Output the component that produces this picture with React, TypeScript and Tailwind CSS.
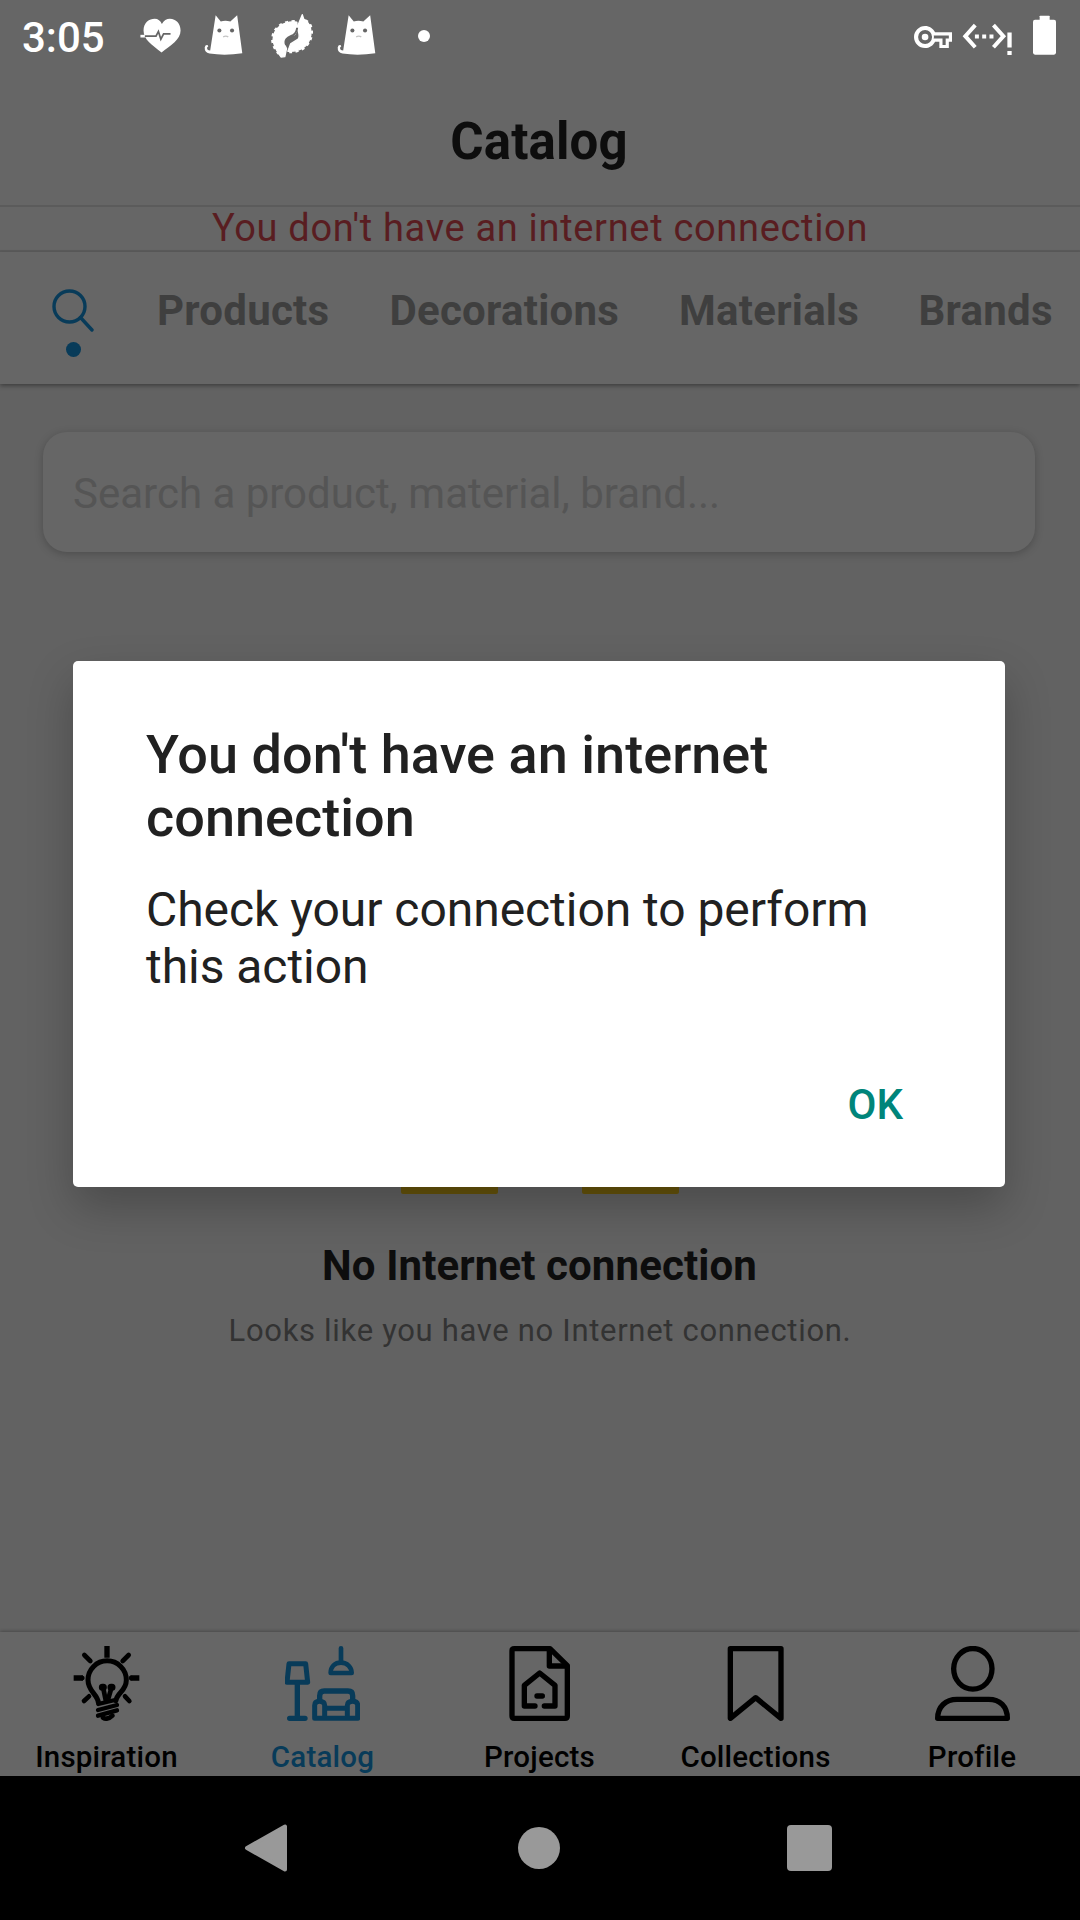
import type { ReactNode } from "react";

function CatIcon({ className }: { className: string }) {
  return (
    <svg className={className} viewBox="590 40 120 140" preserveAspectRatio="none">
      <path fill="#fff" d="M627 47 L642 65 Q655 61 670 65 L690 47 L705 160 Q655 168 609 161 Q594 158 595 142 Q597 134 604 136 Q608 139 602 143 Q601 152 611 152 Z" />
      <circle cx="638" cy="92" r="6" fill="#666" />
      <circle cx="675" cy="92" r="6" fill="#666" />
      <path d="M649 111 Q657 107 664 111" stroke="#c4c4c4" strokeWidth="4" fill="none" />
    </svg>
  );
}

function StatusBar() {
  return (
    <header className="flex h-[72px] shrink-0 items-start pl-[22px] pr-[23px] text-white">
      <div className="w-[116px] shrink-0 pt-[14px] text-[42px] font-medium leading-[48px]">3:05</div>
      <svg className="mt-[13px] h-[47px] w-[45px]" viewBox="400 40 130 140" preserveAspectRatio="none">
        <path fill="#fff" d="M468 158 C440 134 416 120 416 92 C416 68 433 57 448 57 C458 57 465 63 469 73 C474 62 483 57 492 57 C510 57 523 72 523 92 C523 120 495 135 468 158Z" />
        <path d="M407 109 H420" stroke="#fff" strokeWidth="8" />
        <path d="M420 109 H452 L459 95 L466 118 L474 102 H494" stroke="#666" strokeWidth="5" fill="none" />
      </svg>
      <CatIcon className="ml-[20px] mt-[13px] h-[47px] w-[41px]" />
      <svg className="ml-[24px] mt-[13px] h-[47px] w-[48px]" viewBox="780 40 140 140" preserveAspectRatio="none">
        <g fill="#fff" stroke="#fff" strokeLinejoin="round">
          <path strokeWidth="4" d="M864 67 C822 62 796 88 795 118 C796 142 806 152 818 171 L829 170 L834 146 C822 126 834 106 858 104 L866 88 Z" />
          <path strokeWidth="4" d="M880 45 L884 58 C902 68 907 82 905 105 C900 138 875 156 838 154 L846 132 L868 118 C876 108 866 92 866 80 Z" />
          <path fill="none" strokeWidth="8" strokeDasharray="9 10" d="M858 65 C822 64 794 86 793 118 C794 140 804 152 814 164 M888 62 C903 68 909 84 907 105 C902 138 875 157 842 156" />
        </g>
        <path d="M833 136 C825 116 842 112 854 105 C862 100 864 94 865 84" stroke="#666" strokeWidth="6" fill="none" />
      </svg>
      <CatIcon className="ml-[20px] mt-[13px] h-[47px] w-[41px]" />
      <span className="ml-[41px] mt-[30px] h-[12px] w-[12px] rounded-full bg-white" />
      <svg className="ml-auto mt-[18px] h-[38px] w-[38px]" viewBox="0 0 24 24" fill="#fff">
        <path d="M22 19h-6v-4h-2.68c-1.14 2.42-3.6 4-6.32 4-3.86 0-7-3.14-7-7s3.14-7 7-7c2.72 0 5.17 1.58 6.32 4H24v6h-2v4zm-4-2h2v-4h2v-2H11.94l-.23-.67C11.01 8.34 9.11 7 7 7c-2.76 0-5 2.24-5 5s2.24 5 5 5c2.11 0 4.01-1.34 4.71-3.33l.23-.67H18v4z" />
        <circle cx="7" cy="12" r="2.1" />
        <circle cx="7" cy="12" r="5" fill="none" stroke="#fff" strokeWidth="1.2" />
      </svg>
      <svg className="ml-[10px] mt-[13px] h-[47px] w-[51px]" viewBox="246 40 154 140" preserveAspectRatio="none" fill="#fff">
        <path d="M286 76 L256 109 L286 142 M341 76 L371 109 L341 142" stroke="#fff" strokeWidth="12" fill="none" />
        <path d="M285 104h12v12h-12zM307 104h12v12h-12zM329 104h12v12h-12zM383 98h13v45h-13zM383 153h13v12h-13z" />
      </svg>
      <svg className="ml-[19px] mt-[13px] h-[47px] w-[25px]" viewBox="456 40 75 140" preserveAspectRatio="none" fill="#fff">
        <rect x="479" y="48" width="30" height="20" rx="2" />
        <rect x="459" y="60" width="69" height="104" rx="6" />
      </svg>
    </header>
  );
}

const tabs = [
  { label: "Products", className: "w-[232.5px]" },
  { label: "Decorations", className: "w-[289.5px]" },
  { label: "Materials", className: "w-[239.5px]" },
  { label: "Brands", className: "w-[140px]" },
];

function NavItem({ label, active, box, children }: { label: string; active?: boolean; box: string; children: ReactNode }) {
  return (
    <div className={active ? "flex flex-col items-center text-[#083b59]" : "flex flex-col items-center text-black"}>
      <svg className="mt-[14px] h-[75px] w-[75px]" viewBox={box} fill="none" stroke="currentColor" strokeWidth="16" strokeLinecap="round" strokeLinejoin="round">
        {children}
      </svg>
      <span className="mt-[18px] text-[29.500px] font-medium leading-[36px] tracking-[0.2px]">{label}</span>
    </div>
  );
}

function BottomNav() {
  return (
    <nav className="grid h-[144px] shrink-0 grid-cols-[213px_219px_215px_217px_216px] bg-[#666] shadow-[0_-1px_3px_rgba(0,0,0,0.25)]">
      <NavItem label="Inspiration" box="88 78 225 225">
        <path strokeLinecap="butt" d="M202 78V113M102 174H130M272 174H299" />
        <path d="M126 174H128M274 174H277M134 105L152 123M267 105L249 123M148 229L133 243M256 229L269 243" strokeWidth="14" />
        <path d="M176 247C173 222 145 214 145 180a57.500 57.500 0 0 1 115 0C260 214 231 218 229 242" strokeWidth="15" />
        <path d="M190 201L198 240M216 201L206 236" strokeWidth="14" />
        <path d="M188 202H191M214 202H217" strokeWidth="21" />
        <path d="M176 252L226 240M175 270L232 255M175 287L232 271" strokeWidth="13" />
        <path d="M190 293Q204 301 218 287" strokeWidth="14" />
      </NavItem>
      <NavItem label="Catalog" active box="738 78 225 225">
        <path d="M750 131H800L806 187H744Z" strokeWidth="15" />
        <path d="M775 190V295M752 295H798" />
        <path d="M906 85V128M875 159C875 140 888 128 906 128S938 141 938 159Z" strokeWidth="14" />
        <path d="M842 238V227Q842 213 856 213H927Q941 213 941 227V238" />
        <path d="M827 295V256Q827 244 841 244Q857 244 857 256V295ZM925 295V256Q925 244 941 244Q956 244 956 256V295ZM857 265H925M857 295H925" strokeWidth="15" />
      </NavItem>
      <NavItem label="Projects" box="96 78 225 225">
        <path d="M240 86H133Q126 86 126 92V288Q126 295 133 295H285Q292 295 292 288V137Z" />
        <path d="M238 88V138H290" />
        <path d="M195 258H163V196L209 159L255 196V258H223M201 228H217" />
      </NavItem>
      <NavItem label="Collections" box="745 78 225 225">
        <path d="M782 86H934V295L858 233L782 295Z" />
      </NavItem>
      <NavItem label="Profile" box="224 78 225 225">
        <ellipse cx="337.5" cy="146.500" rx="57.500" ry="61" />
        <path d="M232 295C232 260 256 238 290 238H385C419 238 441 260 441 295Z" />
      </NavItem>
    </nav>
  );
}

function Dialog() {
  return (
    <div role="dialog" className="absolute left-[73px] top-[661px] h-[526px] w-[932px] rounded-[5px] bg-white pl-[73px] pt-[62px] text-[#212121] shadow-[0_20px_46px_rgba(0,0,0,0.24)]">
      <h2 className="text-[54px] font-medium leading-[63px] tracking-[0.04px]">
        You don't have an internet
        <br />
        connection
      </h2>
      <p className="mt-[32px] text-[48px] leading-[57px] tracking-[-0.05px]">
        Check your connection to perform
        <br />
        this action
      </p>
      <div className="mt-[89px] flex justify-end pr-[102px]">
        <button className="text-[42px] font-medium leading-[42px] text-[#00857a]">OK</button>
      </div>
    </div>
  );
}

export default function App() {
  return (
    <div className="relative flex h-[1920px] w-[1080px] flex-col overflow-hidden bg-[#666] font-['Roboto',sans-serif]">
      <StatusBar />
      <h1 className="h-[133px] shrink-0 pr-[2px] pt-[40px] text-center text-[51px] font-bold leading-[60px] tracking-[0.1px] text-[#0d0d0d]">Catalog</h1>
      <div className="h-[47px] shrink-0 border-y-[2px] border-[#5b5b5b] text-center text-[38px] leading-[43px] tracking-[0.680px] text-[#591d21]">
        You don't have an internet connection
      </div>
      <div className="relative flex h-[132px] shrink-0 bg-[#666] text-[42px] font-bold leading-[50px] tracking-[0.25px] text-[#3f3f3f] shadow-[0_2px_4px_rgba(0,0,0,0.35)]">
        <div className="flex w-[157px] shrink-0 flex-col items-center pr-[10px] pt-[36px]">
          <svg className="h-[44px] w-[43px]" viewBox="0 0 43 44" fill="none" stroke="#083b59" strokeWidth="3.4" strokeLinecap="round">
            <circle cx="17.5" cy="18.500" r="15.500" />
            <path d="M28.500 29.500L40 42" />
          </svg>
          <span className="mt-[10px] h-[15px] w-[15px] rounded-full bg-[#083b59]" />
        </div>
        {tabs.map((t) => (
          <div key={t.label} className={"shrink-0 pt-[34px] " + t.className}>
            {t.label}
          </div>
        ))}
      </div>
      <main className="flex min-h-0 flex-1 flex-col bg-[#626262]">
        <div className="ml-[43px] mt-[48px] h-[120px] w-[992px] shrink-0 rounded-[24px] bg-[#666] pl-[30px] pt-[37px] text-[42px] leading-[50px] text-[#555] shadow-[0_2px_8px_rgba(0,0,0,0.22)]">
          Search a product, material, brand...
        </div>
        <div className="mt-[608px] flex h-[34px] justify-center gap-[84px]">
          <div className="w-[97px] rounded-[2px] bg-[#67540a]" />
          <div className="w-[97px] rounded-[2px] bg-[#67540a]" />
        </div>
        <h3 className="mt-[47px] pr-[1px] text-center text-[42px] font-bold leading-[50px] tracking-[0.1px] text-[#0d0d0d]">No Internet connection</h3>
        <p className="mt-[20px] text-center text-[31px] leading-[40px] tracking-[0.680px] text-[#333]">Looks like you have no Internet connection.</p>
      </main>
      <BottomNav />
      <footer className="flex h-[144px] shrink-0 items-center bg-black pl-[244px] text-[#999]">
        <svg className="h-[50px] w-[44px]" viewBox="0 0 44 50" fill="currentColor" stroke="currentColor" strokeWidth="4" strokeLinejoin="round">
          <path d="M3 25L41 3.500V46.500Z" />
        </svg>
        <span className="ml-[230px] h-[42px] w-[42px] rounded-full bg-[#999]" />
        <span className="ml-[227px] h-[46px] w-[45px] rounded-[4px] bg-[#999]" />
      </footer>
      <Dialog />
    </div>
  );
}
